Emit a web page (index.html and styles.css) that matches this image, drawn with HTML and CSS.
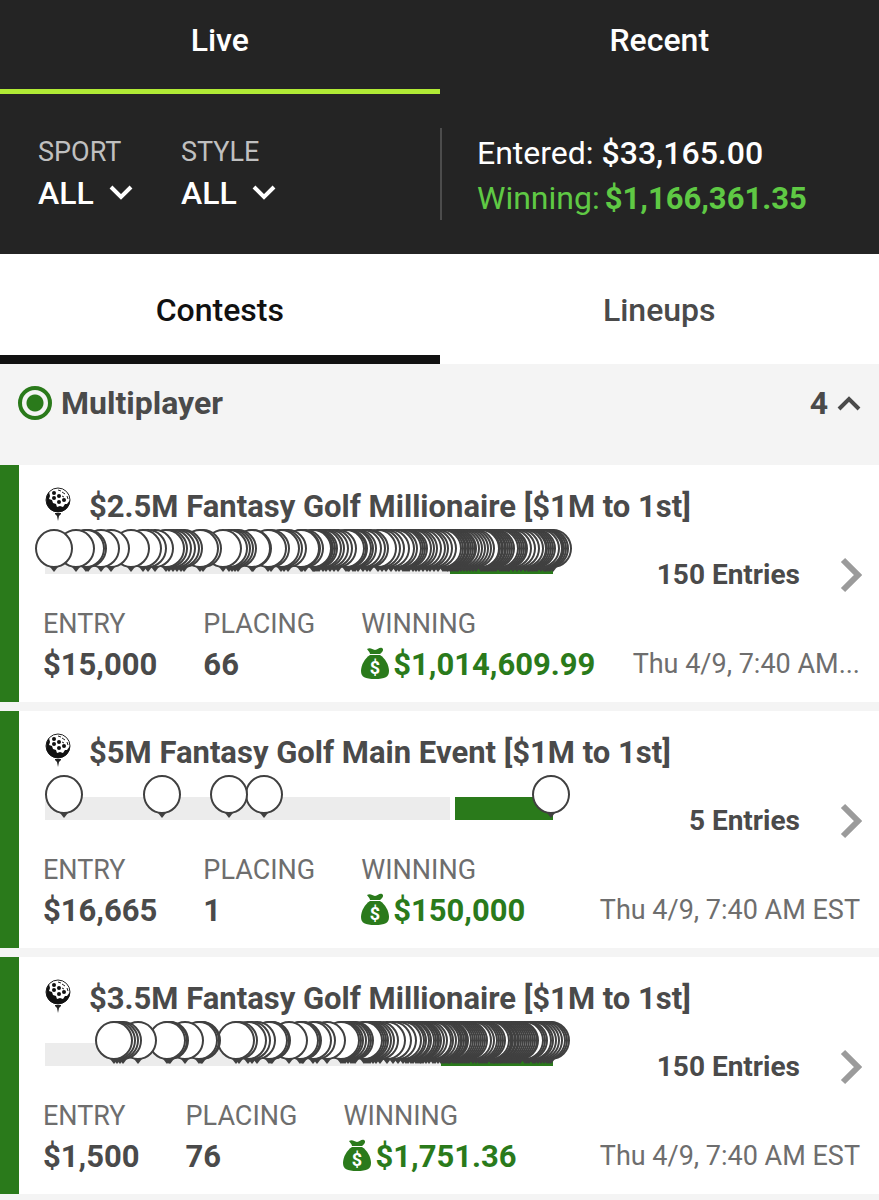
FILE: index.html
```html
<!DOCTYPE html>
<html lang="en">
<head>
    <meta charset="utf-8">
    <meta name="viewport" content="width=device-width, initial-scale=1">
    <title>My Contests</title>
    <link rel="stylesheet" href="styles.css">
</head>
<body>
    <!-- Shared icons -->
    <svg class="sprite" aria-hidden="true">
        <symbol id="golf" viewBox="0 0 26 34">
            <circle cx="13" cy="13" r="12" fill="#fff" stroke="#222" stroke-width="1"/>
            <path d="M4 5 C-2 13 2 25 13 25 C20 25 25 20 25 13 L22 17 L20 17 L18 20 L15 19 L12 20 L11 17 L8 16 L7 13 L4 12 L5 9 Z" fill="#111"/>
            <g fill="#111">
                <circle cx="9" cy="6" r="2"/><circle cx="14" cy="9" r="2"/><circle cx="9" cy="11" r="2"/>
                <circle cx="14" cy="15" r="2"/><circle cx="19" cy="13" r="2"/>
            </g>
            <path d="M13 3 l3 1 M17 5 l3 2 M17 9 l2 1 M22 9 l1 3" stroke="#222" stroke-width="1" fill="none"/>
            <path d="M10 26 h6 v1 l-2 2 l-1 5 l-1 -5 l-2 -2 z" fill="#222"/>
        </symbol>
        <symbol id="bag" viewBox="0 0 28 33">
            <path d="M6 2 C9 0 11 2 14 3 C17 3 18 0 21 1 C23 2 22 5 19 7 H9 C9 5 7 4 6 2 Z" fill="#2a7a1b"/>
            <path d="M9 8 H19 C24 11 28 18 28 24 C28 30 24 32 14 32 C4 32 0 30 0 24 C0 18 4 11 9 8 Z" fill="#2a7a1b"/>
            <text x="14" y="27" class="bag-sign">$</text>
        </symbol>
        <symbol id="down" viewBox="0 0 24 16">
            <path d="M2 2 L12 12 L22 2" fill="none" stroke="currentColor" stroke-width="4"/>
        </symbol>
        <symbol id="right" viewBox="0 0 22 36">
            <path d="M3 3 L18 18 L3 33" fill="none" stroke="#9b9b9b" stroke-width="6"/>
        </symbol>
    </svg>

    <header class="top">
        <nav class="tabs tabs-dark">
            <a href="#live" class="tab active">Live</a>
            <a href="#recent" class="tab">Recent</a>
        </nav>
        <div class="summary">
            <form class="filters">
                <div class="filter">
                    <label for="sport">SPORT</label>
                    <div class="picker">
                        <select id="sport"><option>ALL</option></select>
                        <svg class="caret"><use href="#down"/></svg>
                    </div>
                </div>
                <div class="filter">
                    <label for="style">STYLE</label>
                    <div class="picker">
                        <select id="style"><option>ALL</option></select>
                        <svg class="caret"><use href="#down"/></svg>
                    </div>
                </div>
            </form>
            <div class="totals">
                <p class="total">Entered: <b class="amount">$33,165.00</b></p>
                <p class="total total-win">Winning:<b class="amount">$1,166,361.35</b></p>
            </div>
        </div>
    </header>

    <nav class="tabs tabs-light">
        <a href="#contests" class="tab active">Contests</a>
        <a href="#lineups" class="tab">Lineups</a>
    </nav>

    <main>
        <button class="group" type="button" aria-expanded="true">
            <span class="live-dot"></span>
            <span class="group-name">Multiplayer</span>
            <span>4</span>
            <svg class="caret caret-up"><use href="#down"/></svg>
        </button>

        <section class="card">
            <h2 class="title"><svg class="golf"><use href="#golf"/></svg>$2.5M Fantasy Golf Millionaire [$1M to 1st]</h2>
            <div class="progress">
                <div class="track" data-contest="millionaire25"></div>
                <a href="#entries-1" class="entries">150 Entries <svg class="arrow"><use href="#right"/></svg></a>
            </div>
            <div class="details">
                <dl class="stats">
                    <div><dt>ENTRY</dt><dd>$15,000</dd></div>
                    <div><dt>PLACING</dt><dd>66</dd></div>
                    <div><dt>WINNING</dt><dd class="win"><svg class="bag"><use href="#bag"/></svg>$1,014,609.99</dd></div>
                </dl>
                <time class="date">Thu 4/9, 7:40 AM...</time>
            </div>
        </section>

        <section class="card">
            <h2 class="title"><svg class="golf"><use href="#golf"/></svg>$5M Fantasy Golf Main Event [$1M to 1st]</h2>
            <div class="progress">
                <div class="track" data-contest="mainEvent"></div>
                <a href="#entries-2" class="entries">5 Entries <svg class="arrow"><use href="#right"/></svg></a>
            </div>
            <div class="details">
                <dl class="stats">
                    <div><dt>ENTRY</dt><dd>$16,665</dd></div>
                    <div><dt>PLACING</dt><dd>1</dd></div>
                    <div><dt>WINNING</dt><dd class="win"><svg class="bag"><use href="#bag"/></svg>$150,000</dd></div>
                </dl>
                <time class="date">Thu 4/9, 7:40 AM EST</time>
            </div>
        </section>

        <section class="card">
            <h2 class="title"><svg class="golf"><use href="#golf"/></svg>$3.5M Fantasy Golf Millionaire [$1M to 1st]</h2>
            <div class="progress">
                <div class="track" data-contest="millionaire35"></div>
                <a href="#entries-3" class="entries">150 Entries <svg class="arrow"><use href="#right"/></svg></a>
            </div>
            <div class="details">
                <dl class="stats">
                    <div><dt>ENTRY</dt><dd>$1,500</dd></div>
                    <div><dt>PLACING</dt><dd>76</dd></div>
                    <div><dt>WINNING</dt><dd class="win"><svg class="bag"><use href="#bag"/></svg>$1,751.36</dd></div>
                </dl>
                <time class="date">Thu 4/9, 7:40 AM EST</time>
            </div>
        </section>
    </main>

    <script src="script.js"></script>
</body>
</html>
```

FILE: styles.css
```css
* {
    box-sizing: border-box;
}

body {
    margin: 0;
    background-color: #f4f4f4;
    color: #4a4a4a;
    font-family: Roboto, "Liberation Sans", sans-serif;
    font-size: 31px;
    line-height: 40px;
}

a {
    color: inherit;
    text-decoration: none;
}

h2, p, dl, dd {
    margin: 0;
}

.sprite {
    display: none;
}

/* Tabs */
.tabs {
    display: flex;
}

.tab {
    flex: 1;
    text-align: center;
    font-size: 32px;
    font-weight: 500;
}

.tabs-dark .tab {
    height: 94px;
    padding-top: 20px;
    border-bottom: 5px solid transparent;
}

.tabs-dark .active {
    border-color: #b0ea35;
}

.tabs-light {
    background-color: white;
}

.tabs-light .tab {
    height: 110px;
    padding-top: 36px;
    border-bottom: 9px solid transparent;
}

.tabs-light .active {
    color: #111;
    border-color: #111;
}

/* Dark header */
.top {
    background-color: #242424;
    color: white;
}

.summary {
    display: flex;
    padding: 34px 0;
}

.filters {
    flex: 1;
    display: flex;
    gap: 48px;
    padding-left: 38px;
}

.filter label {
    display: block;
    color: #c0c0c0;
    font-size: 27px;
    line-height: 36px;
    padding-top: 6px;
}

.picker {
    display: grid;
    align-items: center;
    width: 95px;
}

.picker select,
.picker .caret {
    grid-area: 1 / 1;
}

.picker select {
    appearance: none;
    width: 100%;
    padding: 0;
    border: none;
    background: none;
    color: white;
    font: 500 32px/46px Roboto, sans-serif;
}

.caret {
    width: 24px;
    height: 16px;
    justify-self: end;
    pointer-events: none;
}

.totals {
    flex: 1;
    height: 92px;
    padding: 3px 0 0 35px;
    border-left: 2px solid #4c4c4c;
}

.total {
    font-size: 32px;
    line-height: 45px;
}

.total-win {
    color: #5fc944;
}

.amount {
    font-weight: 500;
}

.total-win .amount {
    font-size: 31px;
    font-weight: 700;
    padding-left: 5px;
}

/* Group heading */
.group {
    display: flex;
    align-items: center;
    width: 100%;
    height: 101px;
    padding: 0 18px 23px;
    border: none;
    background: none;
    color: #4a4a4a;
    font: 700 32px/40px Roboto, sans-serif;
}

.live-dot {
    width: 34px;
    height: 34px;
    margin-right: 9px;
    border: 4px solid #2a7a1b;
    border-radius: 50%;
    background: radial-gradient(circle, #2a7a1b 8px, transparent 9px);
}

.group-name {
    flex: 1;
    text-align: left;
}

.caret-up {
    margin-left: 9px;
    transform: rotate(180deg);
}

/* Contest cards */
.card {
    height: 237px;
    margin-bottom: 9px;
    padding: 22px 19px 0 26px;
    border-left: 19px solid #2a7a1b;
    background-color: white;
}

.title {
    display: flex;
    align-items: center;
    gap: 18px;
    font-size: 31px;
    font-weight: 700;
    white-space: nowrap;
}

.golf {
    width: 26px;
    height: 34px;
    margin-bottom: 6px;
}

.progress {
    display: flex;
    align-items: center;
    height: 70px;
}

.track {
    position: relative;
    flex: 1;
    height: 23px;
    background-color: #ececec;
}

.paid {
    position: absolute;
    top: 0;
    right: 0;
    height: 100%;
    background-color: #2a7a1b;
}

.paid-gap {
    border-left: 5px solid white;
}

/* Golf ball on a tee marks one entry */
.pin {
    position: absolute;
    top: -22px;
    width: 38px;
    height: 39px;
    margin-left: -19px;
    border: 2px solid #404040;
    border-radius: 50%;
    background-color: white;
}

.pin::after {
    content: "";
    position: absolute;
    top: 36px;
    left: 13px;
    border: 4px solid transparent;
    border-top: 5px solid #404040;
    border-bottom: none;
}

.entries {
    display: flex;
    align-items: center;
    justify-content: flex-end;
    gap: 40px;
    width: 307px;
    padding-top: 26px;
    font-size: 28px;
    font-weight: 700;
}

.arrow {
    width: 22px;
    height: 36px;
    margin-right: -2px;
}

.details {
    display: flex;
    align-items: flex-end;
    gap: 34px;
    margin-top: 7px;
    margin-left: -2px;
}

.stats {
    display: flex;
    gap: 46px;
}

dt {
    color: #6e6e6e;
    font-size: 27px;
}

dd {
    font-size: 31px;
    font-weight: 700;
    line-height: 42px;
}

.win {
    display: flex;
    align-items: center;
    gap: 4px;
    color: #2a7a1b;
}

.bag {
    width: 28px;
    height: 33px;
    margin-bottom: 4px;
}

.bag-sign {
    fill: white;
    font-size: 18px;
    font-weight: 700;
    text-anchor: middle;
}

.date {
    flex: 1;
    color: #6e6e6e;
    font-size: 27px;
    line-height: 44px;
    text-align: right;
    white-space: nowrap;
}
```

FILE: script.js
```javascript
// Length of the score scale
const scale = 508;

// Entry positions and the start of the paid zone for each contest
const contests = {
    millionaire25: {
        paidFrom: 405,
        gap: false,
        entries: [
            9, 31, 41, 43, 56, 66, 86, 98, 103, 110, 121, 124, 128, 132, 136, 139, 155, 158,
            178, 184, 187, 190, 193, 207, 208, 223, 226, 236, 239, 243, 256, 257, 260, 268, 269,
            270, 272, 274, 278, 281, 285, 289, 293, 301, 303, 304, 308, 310, 313, 318, 322, 325,
            333, 337, 341, 346, 351, 354, 358, 360, 362, 364, 368, 371, 374, 378, 382, 385, 389,
            393, 398, 400, 402, 403, 405, 406, 408, 410, 412, 413, 416, 419, 422, 425, 428, 431,
            436, 437, 439, 440, 442, 443, 445, 447, 449, 451, 455, 457, 459, 461, 463, 464, 468,
            472, 476, 480, 483, 484, 486, 488, 490, 492, 496, 499, 500, 501, 503, 505, 508
        ]
    },
    mainEvent: {
        paidFrom: 405,
        gap: true,
        entries: [19, 117, 184, 219, 506]
    },
    millionaire35: {
        paidFrom: 396,
        gap: false,
        entries: [
            69, 72, 75, 78, 93, 122, 124, 125, 140, 154, 156, 157, 191, 194, 203, 207, 212, 224,
            226, 227, 244, 255, 257, 258, 268, 272, 282, 296, 298, 300, 303, 306, 308, 310, 319,
            321, 323, 325, 328, 331, 335, 342, 348, 353, 358, 361, 363, 366, 368, 371, 373, 375,
            376, 378, 381, 384, 388, 390, 393, 396, 398, 399, 401, 403, 404, 405, 408, 410, 412,
            414, 416, 418, 420, 422, 424, 428, 431, 434, 436, 438, 440, 442, 446, 448, 449, 450,
            452, 453, 455, 456, 458, 460, 462, 464, 466, 468, 470, 472, 474, 475, 480, 482, 484,
            488, 490, 493, 496, 499, 502, 504, 506
        ]
    }
};

document.querySelectorAll('.track').forEach((track) => {
    const contest = contests[track.dataset.contest];

    const paid = document.createElement('div');
    paid.className = contest.gap ? 'paid paid-gap' : 'paid';
    paid.style.width = `${(1 - contest.paidFrom / scale) * 100}%`;
    track.appendChild(paid);

    // Lower scores are drawn last so they stay on top
    contest.entries.slice().reverse().forEach((score) => {
        const pin = document.createElement('span');
        pin.className = 'pin';
        pin.style.left = `${score / scale * 100}%`;
        track.appendChild(pin);
    });
});
```
